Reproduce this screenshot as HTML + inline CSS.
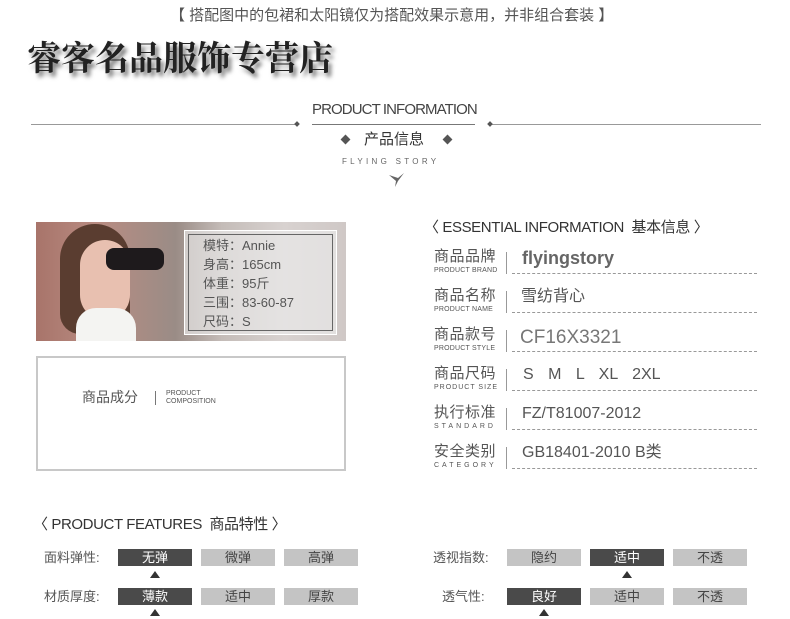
<!DOCTYPE html>
<html><head><meta charset="utf-8"><style>
body{margin:0;width:790px;height:619px;background:#fff;position:relative;overflow:hidden;font-family:"Liberation Sans","Noto Sans CJK SC",sans-serif;color:#555}
.a{position:absolute;white-space:nowrap;line-height:1.15}
.lbl{font-size:15px;color:#555;letter-spacing:0.5px}
.sub{font-size:7px;color:#555;letter-spacing:0.2px;line-height:1}
.dash{position:absolute;height:0;border-top:1px dashed #999;left:512px;width:245px}
.sep{position:absolute;left:506px;width:1px;height:22px;background:#999}
.val{font-size:16px;color:#555}
.b{position:absolute;width:74px;height:17px;background:#c4c4c4;color:#444;font-size:13px;text-align:center;line-height:17px}
.b.d{background:#4a4a4a;color:#fff}
.tri{position:absolute;width:0;height:0;border-left:5px solid transparent;border-right:5px solid transparent;border-bottom:7px solid #333}
</style></head><body>
<div class="a" style="left:170px;top:7px;font-size:15px;color:#555">【 搭配图中的包裙和太阳镜仅为搭配效果示意用，并非组合套装 】</div>
<div class="a" style="left:27px;top:36px;font-size:34px;font-weight:bold;font-family:'Noto Serif CJK SC',serif;color:#222;text-shadow:3px 4px 4px #777">睿客名品服饰专营店</div>
<div class="a" style="left:312px;top:101px;font-size:15px;color:#444;letter-spacing:-0.9px">PRODUCT INFORMATION</div>
<div class="a" style="left:312px;top:124px;width:163px;height:1px;background:#777"></div>
<div class="a" style="left:31px;top:124px;width:266px;height:1px;background:#999"></div>
<div class="a" style="left:490px;top:124px;width:271px;height:1px;background:#999"></div>
<div class="a" style="left:295px;top:122px;width:4px;height:4px;background:#555;transform:rotate(45deg)"></div>
<div class="a" style="left:488px;top:122px;width:4px;height:4px;background:#555;transform:rotate(45deg)"></div>
<div class="a" style="left:342px;top:136px;width:7px;height:7px;background:#555;transform:rotate(45deg)"></div>
<div class="a" style="left:444px;top:136px;width:7px;height:7px;background:#555;transform:rotate(45deg)"></div>
<div class="a" style="left:364px;top:131px;font-size:15px;color:#333">产品信息</div>
<div class="a" style="left:342px;top:157px;font-size:8px;letter-spacing:3.3px;color:#666">FLYING STORY</div>
<svg class="a" style="left:388px;top:172px" width="18" height="16"><path d="M1 3 L8 9 L7 15 L10 9 L16 1 L10 6 Z" fill="#666"/></svg>

<div class="a" style="left:36px;top:222px;width:310px;height:119px;background:linear-gradient(90deg,#a8746a 0%,#b88c82 20%,#9a8c86 45%,#c4bcb8 60%,#d8d2d0 80%,#cfc8c6 100%)"></div>
<div class="a" style="left:60px;top:224px;width:70px;height:110px;border-radius:35px 35px 20px 20px;background:#5a3d30"></div>
<div class="a" style="left:80px;top:240px;width:50px;height:80px;border-radius:25px;background:#e8c0b0"></div>
<div class="a" style="left:106px;top:248px;width:58px;height:22px;border-radius:8px;background:#1e1a1c"></div>
<div class="a" style="left:76px;top:308px;width:60px;height:33px;background:#f4f4f2;border-radius:20px 20px 0 0"></div>
<div class="a" style="left:184px;top:230px;width:151px;height:103px;background:rgba(235,235,235,.65);border:1px solid #fff"></div>
<div class="a" style="left:188px;top:234px;width:143px;height:95px;border:1px solid #666"></div>
<div class="a" style="left:203px;top:236px;font-size:13px;color:#555;line-height:19px">模特：Annie<br>身高：165cm<br>体重：95斤<br>三围：83-60-87<br>尺码：S</div>

<div class="a" style="left:36px;top:356px;width:306px;height:111px;border:2px solid #c8c8c8"></div>
<div class="a" style="left:82px;top:389px;font-size:14px;color:#555">商品成分</div>
<div class="a" style="left:155px;top:391px;width:1px;height:14px;background:#777"></div>
<div class="a" style="left:166px;top:390px;font-size:7px;line-height:8px;color:#555">PRODUCT<br>COMPOSITION</div>

<div class="a" style="left:424px;top:219px;font-size:15px;color:#333;letter-spacing:-0.4px">〈 ESSENTIAL INFORMATION &nbsp;基本信息 〉</div>

<div class="a lbl" style="left:434px;top:248px">商品品牌</div><div class="a sub" style="left:434px;top:267px">PRODUCT BRAND</div>
<div class="sep" style="top:252px"></div><div class="a" style="left:522px;top:248px;font-size:18px;font-weight:bold;color:#666">flyingstory</div><div class="dash" style="top:273px"></div>

<div class="a lbl" style="left:434px;top:287px">商品名称</div><div class="a sub" style="left:434px;top:306px">PRODUCT NAME</div>
<div class="sep" style="top:291px"></div><div class="a val" style="left:521px;top:288px">雪纺背心</div><div class="dash" style="top:312px"></div>

<div class="a lbl" style="left:434px;top:326px">商品款号</div><div class="a sub" style="left:434px;top:345px">PRODUCT STYLE</div>
<div class="sep" style="top:330px"></div><div class="a" style="left:520px;top:327px;font-size:19px;color:#777">CF16X3321</div><div class="dash" style="top:351px"></div>

<div class="a lbl" style="left:434px;top:365px">商品尺码</div><div class="a sub" style="left:434px;top:384px;letter-spacing:1px">PRODUCT SIZE</div>
<div class="sep" style="top:369px"></div><div class="a val" style="left:523px;top:366px;word-spacing:10px">S M L XL 2XL</div><div class="dash" style="top:390px"></div>

<div class="a lbl" style="left:434px;top:404px">执行标准</div><div class="a sub" style="left:434px;top:423px;letter-spacing:3px">STANDARD</div>
<div class="sep" style="top:408px"></div><div class="a val" style="left:522px;top:405px">FZ/T81007-2012</div><div class="dash" style="top:429px"></div>

<div class="a lbl" style="left:434px;top:443px">安全类别</div><div class="a sub" style="left:434px;top:462px;letter-spacing:3px">CATEGORY</div>
<div class="sep" style="top:447px"></div><div class="a val" style="left:522px;top:444px">GB18401-2010 B类</div><div class="dash" style="top:468px"></div>

<div class="a" style="left:33px;top:516px;font-size:15px;color:#333;letter-spacing:-0.4px">〈 PRODUCT FEATURES &nbsp;商品特性 〉</div>
<div class="a" style="left:44px;top:549px;font-size:13px;color:#555;line-height:17px">面料弹性:</div>
<div class="b d" style="left:118px;top:549px">无弹</div><div class="b" style="left:201px;top:549px">微弹</div><div class="b" style="left:284px;top:549px">高弹</div>
<div class="tri" style="left:150px;top:571px"></div>
<div class="a" style="left:44px;top:588px;font-size:13px;color:#555;line-height:17px">材质厚度:</div>
<div class="b d" style="left:118px;top:588px">薄款</div><div class="b" style="left:201px;top:588px">适中</div><div class="b" style="left:284px;top:588px">厚款</div>
<div class="tri" style="left:150px;top:609px"></div>
<div class="a" style="left:433px;top:549px;font-size:13px;color:#555;line-height:17px">透视指数:</div>
<div class="b" style="left:507px;top:549px">隐约</div><div class="b d" style="left:590px;top:549px">适中</div><div class="b" style="left:673px;top:549px">不透</div>
<div class="tri" style="left:622px;top:571px"></div>
<div class="a" style="left:442px;top:588px;font-size:13px;color:#555;line-height:17px">透气性:</div>
<div class="b d" style="left:507px;top:588px">良好</div><div class="b" style="left:590px;top:588px">适中</div><div class="b" style="left:673px;top:588px">不透</div>
<div class="tri" style="left:539px;top:609px"></div>
</body></html>
